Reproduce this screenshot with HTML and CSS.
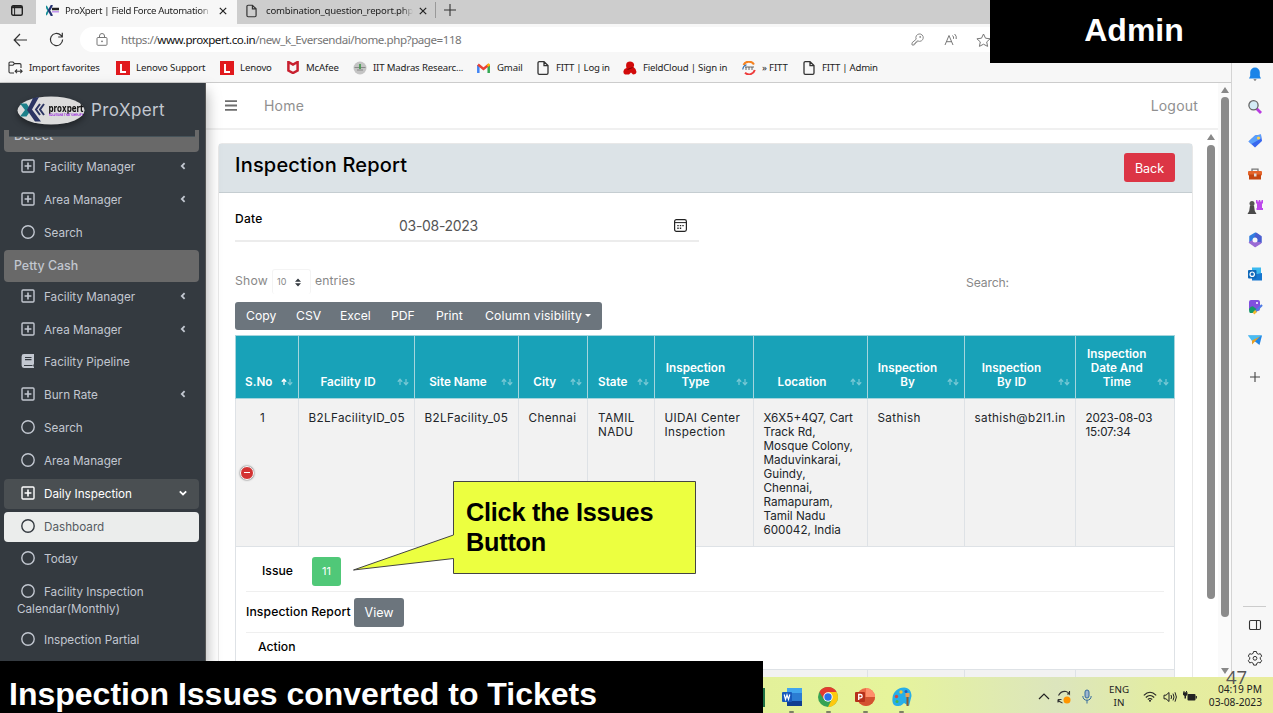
FILE: index.html
```
<!DOCTYPE html>
<html lang="en">
<head>
  <meta charset="UTF-8" />
  <title>ProXpert | Field Force Automation</title>
  <link rel="stylesheet" href="styles.css">
</head>
<body>
  <svg class="defs">
    <symbol id="plus-box" viewBox="0 0 14 14"><rect x="1" y="1" width="12" height="12" rx="1" fill="none" stroke="currentColor" stroke-width="1.4"/><path d="M7 3.6v6.8M3.6 7h6.8" stroke="currentColor" stroke-width="1.6"/></symbol>
    <symbol id="ring" viewBox="0 0 14 14"><circle cx="7" cy="7" r="6.2" fill="none" stroke="currentColor" stroke-width="1.4"/></symbol>
    <symbol id="book" viewBox="0 0 14 14"><path d="M3 0h10v10.5h-.7v2H13V14H3a2.4 2.4 0 0 1-2.4-2.4V2.4A2.4 2.4 0 0 1 3 0z" fill="currentColor"/><path d="M4 3.5h6.5M4 5.6h6.5M3 11.5h8.5" stroke="#343a40" stroke-width="1.1"/></symbol>
    <symbol id="left" viewBox="0 0 8 8"><path d="M5.6 1.2 2.8 4l2.8 2.8" fill="none" stroke="currentColor" stroke-width="1.8"/></symbol>
    <symbol id="down" viewBox="0 0 8 8"><path d="M.8 2.4 4 5.4l3.2-3" fill="none" stroke="currentColor" stroke-width="1.8"/></symbol>
    <symbol id="page" viewBox="0 0 12 14"><path d="M1 2a1.3 1.3 0 0 1 1.3-1.3H7L11 4.6V12a1.3 1.3 0 0 1-1.3 1.3H2.3A1.3 1.3 0 0 1 1 12zM7 .7v3.9h4" fill="none" stroke="#333" stroke-width="1.3"/></symbol>
    <symbol id="lenovo" viewBox="0 0 14 14"><rect width="14" height="14" fill="#e1191d"/><path d="M5 3v8h5" fill="none" stroke="#fff" stroke-width="1.9"/></symbol>
    <symbol id="sort" viewBox="0 0 12 8"><path d="M3 7V1.5M.8 3.7 3 1.3l2.2 2.4" fill="none" stroke="#fff" stroke-width="1.3"/><path d="M9 1v5.5M6.8 4.3 9 6.7l2.2-2.4" fill="none" stroke="#fff" stroke-opacity=".4" stroke-width="1.3"/></symbol>
    <symbol id="sort-off" viewBox="0 0 12 8"><path d="M3 7V1.5M.8 3.7 3 1.3l2.2 2.4M9 1v5.5M6.8 4.3 9 6.7l2.2-2.4" fill="none" stroke="#fff" stroke-opacity=".4" stroke-width="1.3"/></symbol>
    <symbol id="close" viewBox="0 0 8 8"><path d="M.8.8l6.4 6.4M7.2.8.8 7.2" stroke="#222" stroke-width="1.2"/></symbol>
  </svg>

  <div class="screen">
    <div class="tabs">
      <div class="workspaces"><svg width="12" height="11" viewBox="0 0 12 11"><rect x=".7" y=".7" width="10.6" height="9.6" rx="1.5" fill="none" stroke="#222" stroke-width="1.4"/><path d="M1 2.2h10" stroke="#222" stroke-width="2"/><path d="M3.600 1v9" stroke="#222"/></svg></div>
      <div class="tab active">
        <svg width="13" height="11" viewBox="0 0 13 11"><path d="M0 1l2.4 4.5L0 10" fill="none" stroke="#178e96" stroke-width="1.8"/><path d="M6 0 3 5.5 6 11" fill="none" stroke="#263272" stroke-width="2.2"/><path d="M6 4h7" stroke="#222" stroke-width="2.5"/><path d="M6 6.8h7" stroke="#b983ec" stroke-width="1.3"/></svg>
        <span class="tab-title first">ProXpert | Field Force Automation</span>
        <svg width="8" height="8"><use href="#close"/></svg>
      </div>
      <div class="tab">
        <svg width="11" height="14"><use href="#page"/></svg>
        <span class="tab-title second">combination_question_report.php</span>
        <svg width="8" height="8"><use href="#close"/></svg>
      </div>
      <svg class="new-tab" width="12" height="12" viewBox="0 0 12 12"><path d="M6 0v12M0 6h12" stroke="#333" stroke-width="1.1"/></svg>
    </div>

    <div class="toolbar">
      <svg class="back" width="15" height="14" viewBox="0 0 15 14"><path d="M14 7H1.5M7 1 1.2 7 7 13" fill="none" stroke="#333" stroke-width="1.2"/></svg>
      <svg class="reload" width="15" height="15" viewBox="0 0 15 15"><path d="M13.6 7.5A6.1 6.1 0 1 1 11.8 3.200L13.300 4.900M13.300.8v4.200H9.200" fill="none" stroke="#333" stroke-width="1.2"/></svg>
      <div class="address">
        <svg width="12" height="13" viewBox="0 0 12 13"><rect x="1" y="4.500" width="10" height="7.800" rx="1" fill="none" stroke="#777"/><path d="M3.500 4.500V3a2.500 2.500 0 0 1 5 0v1.500" fill="none" stroke="#777"/><circle cx="6" cy="8.300" r=".9" fill="#777"/></svg>
        <span class="url">https://<b>www.proxpert.co.in</b>/new_k_Eversendai/home.php?page=118</span>
        <svg class="key" width="13" height="13" viewBox="0 0 13 13"><path d="M5.200 6.200A3.700 3.700 0 1 1 7 8H5.900v1.300H4.500v1.400H3.200V12H1v-2.200z" fill="none" stroke="#888"/><circle cx="9.200" cy="3.900" r=".9" fill="#888"/></svg>
        <svg class="read" width="14" height="13" viewBox="0 0 14 13"><path d="M1 12 5 2.500 9 12M2.500 8.700h5M8.500 2.500q1.500 1.300 1 3.300M10.600 1q2.300 2 1.600 5" fill="none" stroke="#777"/></svg>
        <svg class="star" width="15" height="14" viewBox="0 0 15 14"><path d="m7.500 1 2 4.200 4.600.6-3.400 3.100.9 4.500-4.100-2.200-4.100 2.200.9-4.500L.9 5.800l4.600-.6z" fill="none" stroke="#777"/></svg>
      </div>
    </div>

    <div class="bookmarks">
      <a class="bm import"><svg width="15" height="13" viewBox="0 0 15 13"><path d="M6 12H2.200A1.200 1.200 0 0 1 1 10.800V2.200A1.200 1.200 0 0 1 2.200 1H5l1.500 1.600h5.300A1.200 1.200 0 0 1 13 3.800V7M1 4.200h4l1.500-1.500M7.500 10.300h6M9 8.500l-1.800 1.800L9 12.100M12.300 8.500l1.800 1.800-1.800 1.800" fill="none" stroke="#333" stroke-width="1.100"/></svg>Import favorites</a>
      <a class="bm lsup"><svg width="14" height="14"><use href="#lenovo"/></svg>Lenovo Support</a>
      <a class="bm len"><svg width="14" height="14"><use href="#lenovo"/></svg>Lenovo</a>
      <a class="bm mca"><svg width="12" height="13" viewBox="0 0 12 13"><path d="M1.400 1 6 3.500 10.600 1v8.500L6 12 1.400 9.500z" fill="none" stroke="#c8202f" stroke-width="2.500"/></svg>McAfee</a>
      <a class="bm iit"><svg width="14" height="14" viewBox="0 0 14 14"><circle cx="7" cy="7" r="6.500" fill="#c4c4c4"/><path d="M1.500 6.500h11M4 9h6" stroke="#888"/><path d="M7 3v5" stroke="#4a9b54" stroke-width="1.800"/></svg>IIT Madras Researc...</a>
      <a class="bm gm"><svg width="13" height="10" viewBox="0 0 13 10"><path d="M1.300 10V2" stroke="#4285f4" stroke-width="2.500"/><path d="M11.700 10V2" stroke="#34a853" stroke-width="2.500"/><path d="M1 1.500 6.500 6 12 1.500" fill="none" stroke="#ea4335" stroke-width="2.500"/><path d="M10.500 3 12.500 1" stroke="#fbbc04" stroke-width="2.400"/></svg>Gmail</a>
      <a class="bm fl"><svg width="12" height="14"><use href="#page"/></svg>FITT | Log in</a>
      <a class="bm fc"><svg width="14" height="14" viewBox="0 0 14 14"><path d="M4 1.500Q7-.5 10 1.500q2 2 .5 4.500 3 2 3 5-.5 2.500-3.500 2.500L8 11.500l-2 2H2Q0 12.500.5 10 1 7.500 3.500 7 2.500 3.500 4 1.500z" fill="#d20a0a"/><path d="M4.500 8.500l5-2" stroke="#7c0606"/></svg>FieldCloud | Sign in</a>
      <a class="bm ff"><svg width="14" height="14" viewBox="0 0 14 14"><path d="M1.500 4A6 6 0 0 1 12 3.500" fill="none" stroke="#f58220" stroke-width="2"/><path d="M12.800 9A6 6 0 0 1 3 11.800" fill="none" stroke="#ee3b3b" stroke-width="2"/><path d="M.8 8.500Q1 5 4.500 3.800" fill="none" stroke="#2b6cb0" stroke-width="1.200"/><path d="M3 6h9M4 6v3M7 6v3M10 6v3" stroke="#555" stroke-width=".9"/></svg>» FITT</a>
      <a class="bm fa"><svg width="12" height="14"><use href="#page"/></svg>FITT | Admin</a>
    </div>

    <div class="view">
      <div class="sidebar">
        <div class="brand">
          <svg width="72" height="36" viewBox="0 0 72 36"><ellipse cx="37" cy="18.500" rx="33.500" ry="14" fill="#dcdcdc"/><path d="M6 11.500 11 18l-5 6.500h6.500L17 18l-4.500-6.500z" fill="#1c808a"/><path d="m19 6 6-1-7 12.500 9 12h-6L13 18z" fill="#2b3563"/><path d="m26 12-4 5.500 4 5.500M30 12l-4 5.500 4 5.500" fill="none" stroke="#2b3563" stroke-width="2"/><text class="logo-name" x="34.500" y="19.500" textLength="35" lengthAdjust="spacingAndGlyphs">proxpert</text><text class="logo-tag" x="35" y="24" textLength="34" lengthAdjust="spacingAndGlyphs">SOLUTIONS THAT SIMPLIFY</text></svg>
          <span>ProXpert</span>
        </div>
        <div class="nav-header cut">Defect</div>
        <a class="item"><svg class="ico"><use href="#plus-box"/></svg>Facility Manager<svg class="arrow"><use href="#left"/></svg></a>
        <a class="item"><svg class="ico"><use href="#plus-box"/></svg>Area Manager<svg class="arrow"><use href="#left"/></svg></a>
        <a class="item"><svg class="ico"><use href="#ring"/></svg>Search</a>
        <div class="nav-header">Petty Cash</div>
        <a class="item"><svg class="ico"><use href="#plus-box"/></svg>Facility Manager<svg class="arrow"><use href="#left"/></svg></a>
        <a class="item"><svg class="ico"><use href="#plus-box"/></svg>Area Manager<svg class="arrow"><use href="#left"/></svg></a>
        <a class="item"><svg class="ico"><use href="#book"/></svg>Facility Pipeline</a>
        <a class="item"><svg class="ico"><use href="#plus-box"/></svg>Burn Rate<svg class="arrow"><use href="#left"/></svg></a>
        <a class="item"><svg class="ico"><use href="#ring"/></svg>Search</a>
        <a class="item"><svg class="ico"><use href="#ring"/></svg>Area Manager</a>
        <a class="item open"><svg class="ico"><use href="#plus-box"/></svg>Daily Inspection<svg class="arrow"><use href="#down"/></svg></a>
        <a class="item current"><svg class="ico"><use href="#ring"/></svg>Dashboard</a>
        <a class="item"><svg class="ico"><use href="#ring"/></svg>Today</a>
        <a class="item"><svg class="ico"><use href="#ring"/></svg>Facility Inspection</a>
        <span class="wrap">Calendar(Monthly)</span>
        <a class="item"><svg class="ico"><use href="#ring"/></svg>Inspection Partial</a>
      </div>

      <div class="main">
        <div class="navbar">
          <svg width="12" height="11" viewBox="0 0 12 11"><path d="M0 1.200h12M0 5.500h12M0 9.800h12" stroke="#6e6e6e" stroke-width="1.800"/></svg>
          <span class="home">Home</span>
          <span class="logout">Logout</span>
        </div>
        <div class="content">
          <div class="card">
            <div class="card-header">
              <h3>Inspection Report</h3>
              <button class="btn-back">Back</button>
            </div>
            <div class="card-body">
              <div class="date-row">
                <label>Date</label>
                <span class="date">03-08-2023</span>
                <svg width="13" height="13" viewBox="0 0 13 13"><rect x=".6" y=".6" width="11.800" height="11.800" rx="1.800" fill="none" stroke="#222" stroke-width="1.200"/><path d="M1 3.600h11" stroke="#222"/><path d="M3.300 6.600h1.400M5.800 6.600h1.400M8.300 6.600h1.400M3.300 9.200h1.400M5.800 9.200h1.400" stroke="#222" stroke-width="1.400"/></svg>
              </div>
              <div class="controls">
                <span class="show">Show</span>
                <span class="select">10<svg width="6" height="9" viewBox="0 0 6 9"><path d="M0 3.700 3 .4l3 3.300zM0 5.300l3 3.300 3-3.300z" fill="#343a40"/></svg></span>
                <span class="entries">entries</span>
                <span class="search">Search:</span>
              </div>
              <div class="buttons">
                <span class="b1">Copy</span><span class="b2">CSV</span><span class="b3">Excel</span><span class="b4">PDF</span><span class="b5">Print</span><span class="b6">Column visibility<i></i></span>
              </div>
              <table>
                <colgroup><col class="c1"><col class="c2"><col class="c3"><col class="c4"><col class="c5"><col class="c6"><col class="c7"><col class="c8"><col class="c9"><col class="c10"></colgroup>
                <thead>
                  <tr>
                    <th class="asc">S.No<svg><use href="#sort"/></svg></th>
                    <th>Facility ID<svg><use href="#sort-off"/></svg></th>
                    <th>Site Name<svg><use href="#sort-off"/></svg></th>
                    <th>City<svg><use href="#sort-off"/></svg></th>
                    <th>State<svg><use href="#sort-off"/></svg></th>
                    <th>Inspection<br>Type<svg><use href="#sort-off"/></svg></th>
                    <th>Location<svg><use href="#sort-off"/></svg></th>
                    <th>Inspection<br>By<svg><use href="#sort-off"/></svg></th>
                    <th>Inspection<br>By ID<svg><use href="#sort-off"/></svg></th>
                    <th>Inspection<br>Date And<br>Time<svg><use href="#sort-off"/></svg></th>
                  </tr>
                </thead>
                <tbody>
                  <tr class="row">
                    <td class="num">1<span class="collapse"></span></td>
                    <td class="wide">B2LFacilityID_05</td>
                    <td class="wide">B2LFacility_05</td>
                    <td class="wide">Chennai</td>
                    <td class="wide">TAMIL<br>NADU</td>
                    <td class="wide">UIDAI Center<br>Inspection</td>
                    <td>X6X5+4Q7, Cart<br>Track Rd,<br>Mosque Colony,<br>Maduvinkarai,<br>Guindy,<br>Chennai,<br>Ramapuram,<br>Tamil Nadu<br>600042, India</td>
                    <td class="wide">Sathish</td>
                    <td class="wide">sathish@b2l1.in</td>
                    <td class="stamp">2023-08-03<br>15:07:34</td>
                  </tr>
                  <tr class="child">
                    <td colspan="10">
                      <div class="detail issue"><b>Issue</b><button class="btn-issue">11</button></div>
                      <div class="detail report"><b>Inspection Report</b><button class="btn-view">View</button></div>
                      <div class="detail action"><b>Action</b></div>
                    </td>
                  </tr>
                  <tr class="next"><td></td><td></td><td></td><td></td><td></td><td></td><td></td><td></td><td></td><td></td></tr>
                </tbody>
              </table>
            </div>
          </div>
          <div class="scroll inner"><i class="tri"></i><div class="thumb"></div></div>
        </div>
      </div>
      <div class="scroll outer"><i class="tri"></i><div class="thumb"></div><i class="tri flip"></i></div>

      <div class="edge">
        <svg viewBox="0 0 16 16"><path d="M8 1.500a4.800 4.800 0 0 1 4.800 4.800V10l1.200 2.500H2L3.200 10V6.300A4.800 4.800 0 0 1 8 1.500z" fill="#1a84e8"/><path d="M6.300 13.200h3.400L8 15z" fill="#666"/></svg>
        <svg viewBox="0 0 16 16"><path d="m9.500 9.500 4.500 4.500" stroke="#b83be0" stroke-width="2.800"/><circle cx="6.500" cy="6.300" r="4.600" fill="#d4ecf6" stroke="#666" stroke-width="1.300"/></svg>
        <svg viewBox="0 0 16 16"><path d="M8 2.500 14 1.500l1 6.500-7 6.500L1.500 8.500z" fill="#3867ee"/><path d="M8 2.500 14 1.500v4L4.500 11 1.500 8.500z" fill="#5aa0fb"/><circle cx="11.500" cy="5" r="1.600" fill="#ffcf4a"/></svg>
        <svg viewBox="0 0 16 16"><path d="M5 5V3.200h6V5" fill="none" stroke="#777" stroke-width="1.300"/><rect x="1" y="5" width="14" height="4.500" rx="1" fill="#e4652b"/><rect x="2" y="8.500" width="12" height="5" fill="#c44610"/><rect x="7" y="7.500" width="2.500" height="3" fill="#ddd"/></svg>
        <svg viewBox="0 0 16 16"><path d="M9 1h1.500v1.500h1.200V1h1.600v1.500h1.200V1H16v3.500h-1V9h1v2H9.500V9H10V4.500H9z" fill="#bd48ec"/><circle cx="5" cy="4.500" r="2.500" fill="#555"/><path d="M3 6.500h4l.8 5.500 1.700 3H.5L2.200 12z" fill="#4a4a4a"/></svg>
        <svg viewBox="0 0 16 16"><path d="M8.500 1.200 3 4.500v6L8 8.500V6l4-2z" fill="#317ee0" stroke="#317ee0" stroke-width="1.500" stroke-linejoin="round"/><path d="m9.500 1.500 4.500 3v6L10.500 9V6.500L8 5z" fill="#4a5ed0" stroke="#4a5ed0" stroke-width="1.500" stroke-linejoin="round"/><path d="m2.500 10.500 4-2 3 2 4 .5L8 14.500z" fill="#9a6bd5" stroke="#9a6bd5" stroke-width="1.500" stroke-linejoin="round"/><circle cx="8" cy="8" r="2.500" fill="#f7f7f7"/></svg>
        <svg viewBox="0 0 16 16"><rect x="5" y="1.500" width="9" height="12" fill="#3bb9ef"/><path d="M5 9 15 7v7.500H5z" fill="#1676cf"/><rect x="1" y="4" width="8.500" height="8.500" rx="1" fill="#0f68b9"/><circle cx="5.200" cy="8.200" r="2.200" fill="none" stroke="#fff" stroke-width="1.200"/></svg>
        <svg viewBox="0 0 16 16"><rect x="2" y="1" width="11" height="11" rx="2" fill="#8150df"/><path d="M2 10q3-5 6-1l3 2q-1 2-3 3H3q-1-1-1-4z" fill="#159a69"/><path d="m8 13 7-7" stroke="#4f7be5" stroke-width="2.200"/><path d="M6.500 14.500 9 12" stroke="#f5b82a" stroke-width="2.500"/><circle cx="10" cy="4" r="1" fill="#fff"/></svg>
        <svg viewBox="0 0 16 16"><path d="M1 3.500h14L12.500 13 8 9.500z" fill="#2186e6"/><path d="M1 3.500h14L5 9z" fill="#49bdf2"/><path d="M5 8.500 13 4.500 7.500 10 5 12.500z" fill="#e9a025"/></svg>
        <svg class="add" viewBox="0 0 16 16"><path d="M8 3v10M3 8h10" stroke="#444" stroke-width="1.100"/></svg>
        <div class="edge-foot">
          <svg viewBox="0 0 16 16"><rect x="2.500" y="3.500" width="11" height="9" rx="1.200" fill="none" stroke="#333" stroke-width="1.100"/><path d="M9.500 3.500v9" stroke="#333" stroke-width="1.100"/></svg>
          <svg viewBox="0 0 16 16"><path d="M6.600 1.500h2.800l.5 1.900 1.500.8 1.900-.5 1.400 2.400L13.300 7.500v1.700l1.400 1.300-1.400 2.400-1.900-.5-1.500.8-.5 1.900H6.600l-.5-1.900-1.500-.8-1.900.5-1.400-2.400 1.400-1.300V7.500L1.300 6.100l1.400-2.400 1.900.5 1.500-.8z" fill="none" stroke="#333" stroke-linejoin="round"/><circle cx="8" cy="8.300" r="1.900" fill="none" stroke="#333"/></svg>
        </div>
      </div>
    </div>

    <div class="taskbar">
      <div class="apps">
        <i class="excel"></i>
        <div class="app"><svg viewBox="0 0 20 20"><rect x="5" y="1" width="15" height="18" rx="1.500" fill="#2b7cd3"/><path d="M5 1h15v5H5z" fill="#41a5ee"/><path d="M5 14h15v5H5z" fill="#103f91"/><rect y="5" width="10" height="10" rx="1" fill="#185abd"/><path d="m2.200 7.500 1.300 5L5 8l1.500 4.500 1.300-5" fill="none" stroke="#fff" stroke-width="1.200"/></svg></div>
        <div class="app"><svg viewBox="0 0 20 20"><circle cx="10" cy="10" r="10" fill="#35a353"/><path d="M18.660 5A10 10 0 0 1 10 20l4-8-4-7z" fill="#fdc90f"/><path d="M1.340 5A10 10 0 0 1 18.660 5H10l-4 7.500z" fill="#e33b2e"/><circle cx="10" cy="10" r="4.700" fill="#fff"/><circle cx="10" cy="10" r="3.700" fill="#2a6fe8"/></svg></div>
        <div class="app"><svg viewBox="0 0 20 20"><circle cx="11" cy="10" r="9" fill="#ed6c47"/><path d="M11 1a9 9 0 0 1 9 9h-9z" fill="#ff8f6b"/><path d="M2 10h18a9 9 0 0 1-18 0z" fill="#d35230"/><rect y="5" width="10" height="10" rx="1" fill="#b7301a"/><path d="M3.700 13V7.500h1.800a1.600 1.600 0 0 1 0 3.300H3.700" fill="none" stroke="#fff" stroke-width="1.300"/></svg></div>
        <div class="app"><svg viewBox="0 0 20 20"><path d="M12 .5c5 0 7.500 4 7.500 8.500L17 19l-5-3c-3 3-4 3-7 3-4 0-5-4-4.500-8C1 5 6 .5 12 .5z" fill="#27aee8"/><circle cx="9" cy="5" r="1.700" fill="#f4c430"/><circle cx="4.500" cy="9.500" r="1.700" fill="#d6473e"/><circle cx="5" cy="14.500" r="1.500" fill="#45b649"/><circle cx="14" cy="4.500" r="1.500" fill="#1f5fc4"/><path d="M15.500 8v11" stroke="#8c5a2f" stroke-width="2"/><path d="M13.500 6h4v4h-4z" fill="#e8a058"/></svg></div>
      </div>
      <div class="tray">
        <svg class="chev" width="12" height="7" viewBox="0 0 12 7"><path d="m1 6 5-5 5 5" fill="none" stroke="#222" stroke-width="1.200"/></svg>
        <svg class="sync" width="14" height="14" viewBox="0 0 14 14"><path d="M1.500 5.500Q4 .8 9 1.500q2 .5 3.500 2.500V1M12.500 4H10M1 9.500h3.500M1 9.500v3M1 9.500q1.500 3 4.500 3.500" fill="none" stroke="#333" stroke-width="1.100"/><circle cx="10" cy="10" r="3.500" fill="#ff9500"/></svg>
        <svg class="mic" width="10" height="15" viewBox="0 0 10 15"><rect x="3" y="1" width="4" height="8" rx="2" fill="#9db6cf" stroke="#356a9d"/><path d="M.8 7q.3 4.200 4.200 4.200T9.200 7M5 11v3.500" fill="none" stroke="#356a9d"/></svg>
        <div class="lang">ENG<br>IN</div>
        <svg class="wifi" width="14" height="11" viewBox="0 0 14 11"><path d="M.8 4.300q6.200-6.200 12.400 0M2.800 6.500q4.200-4 8.400 0M4.800 8.500q2.200-2 4.400 0" fill="none" stroke="#222" stroke-width="1.100"/><circle cx="7" cy="9.800" r="1" fill="#222"/></svg>
        <svg class="vol" width="14" height="12" viewBox="0 0 14 12"><path d="M1 4.200h2L6 1.500v9L3 7.800H1zM8 4q1.200 2 0 4M10 2.600q2 3.400 0 6.800M12 1.300q2.800 4.700 0 9.400" fill="none" stroke="#222"/></svg>
        <svg class="bat" width="14" height="11" viewBox="0 0 14 11"><rect x="4.500" y="3" width="8" height="6.500" rx="1" fill="#222"/><path d="M13.300 5v2.500" stroke="#222" stroke-width="1.200"/><path d="M1 0v1.500M3.500 0v1.500" stroke="#222"/><path d="M0 1.200h4.500v2.500L3 5v2.500H1.500V5L0 3.700z" fill="#222"/></svg>
        <div class="clock">04:19 PM<br>03-08-2023</div>
      </div>
    </div>

    <!-- slide annotations over the capture -->
    <div class="role">Admin</div>
    <div class="caption">Inspection Issues converted to Tickets</div>
    <div class="slide-no">47</div>
    <div class="callout">
      <svg width="344" height="94" viewBox="0 0 344 94"><path d="M100.500.5h242v92h-242V77.500L.5 89l100-35z" fill="#ecff40" stroke="#444"/></svg>
      <p>Click the Issues<br>Button</p>
    </div>
  </div>
</body>
</html>
```
FILE: styles.css
```
* {
  box-sizing: border-box;
}
body {
  margin: 0;
  font-family: Inter, "Liberation Sans", sans-serif;
  font-size: 11.7px;
  overflow: hidden;
}
svg {
  display: block;
  flex-shrink: 0;
}
.defs {
  display: none;
}
.screen {
  position: relative;
  width: 1273px;
  height: 713px;
  display: flex;
  flex-direction: column;
  overflow: hidden;
  background: #f7f7f7;
}

/* Browser chrome */
.tabs, .toolbar, .bookmarks, .taskbar {
  font-family: "Noto Sans", "Open Sans", sans-serif;
}
.tabs {
  height: 24px;
  display: flex;
  background: #cdcdcd;
}
.workspaces {
  width: 36px;
  padding: 5px 0 0 11px;
}
.tab {
  width: 199px;
  display: flex;
  align-items: center;
  padding: 0 8px 3px 9px;
  font-size: 9.6px;
  color: #222;
}
.tab.active {
  width: 201px;
  padding-left: 10px;
  background: #f7f7f7;
}
.tab-title {
  height: 16px;
  line-height: 16px;
  overflow: hidden;
  white-space: nowrap;
  -webkit-mask-image: linear-gradient(90deg, #000 92%, transparent);
}
.first {
  width: 146px;
  margin: 0 8px 0 6px;
  letter-spacing: -0.33px;
}
.second {
  width: 147px;
  margin: 0 6px 0 9px;
  letter-spacing: -0.2px;
}
.new-tab {
  width: 21px;
  height: 16px;
  margin: 2px 0 0 -1px;
  padding: 2px 0 2px 8px;
  border-left: 1px solid #999;
}
.toolbar {
  height: 29px;
  display: flex;
  align-items: center;
  padding: 3px 0 1px 13px;
}
.reload {
  margin-left: 21px;
}
.address {
  width: 1160px;
  height: 25px;
  margin-left: 16px;
  padding-left: 16px;
  display: flex;
  align-items: center;
  background: #fff;
  border-radius: 13px;
}
.url {
  width: 783px;
  margin-left: 13px;
  font-size: 11.6px;
  letter-spacing: -0.46px;
  color: #757575;
}
.url b {
  font-weight: 400;
  color: #111;
}
.key {
  margin-left: 7px;
}
.read {
  margin-left: 20px;
}
.star {
  margin-left: 18px;
}
.bookmarks {
  height: 30px;
  display: flex;
  border-bottom: 1px solid #ccc;
}
.bm {
  display: flex;
  align-items: center;
  gap: 6px;
  font-size: 9.6px;
  color: #222;
  white-space: nowrap;
  letter-spacing: -0.15px;
}
.import { width: 108px; margin-left: 8px; height: 29px; }
.lsup { width: 104px; }
.len { width: 67px; }
.mca { width: 66px; gap: 7px; }
.iit { width: 124px; }
.gm { width: 60px; gap: 7px; }
.fl { width: 86px; gap: 7px; letter-spacing: -0.25px; }
.fc { width: 119px; letter-spacing: -0.2px; }
.ff { width: 61px; }
.fa { gap: 7px; letter-spacing: -0.25px; }

.view {
  height: 614px;
  margin-top: -20px;
  padding-top: 20px;
  display: flex;
  overflow: hidden;
}

/* App sidebar */
.sidebar {
  width: 206px;
  flex-shrink: 0;
  background: #343a40;
  border-right: 1px solid #555;
  box-shadow: 0 8px 14px rgba(0, 0, 0, 0.35);
  position: relative;
  z-index: 1;
  color: #c2c7d0;
}
.brand {
  height: 47px;
  display: flex;
  align-items: center;
  padding: 7px 0 0 14px;
  font-size: 17px;
  letter-spacing: 0.4px;
}
.brand span {
  margin-left: 5px;
}
.brand svg {
  letter-spacing: 0;
  filter: drop-shadow(0 3px 3px rgba(0, 0, 0, 0.4));
}
.logo-name {
  font: bold 10px "DejaVu Sans", sans-serif;
  fill: #111;
}
.logo-tag {
  font: bold 3.500px "DejaVu Sans", sans-serif;
  fill: #9a28e0;
}
.nav-header {
  width: 195px;
  height: 32px;
  margin: 2px 0 0 4px;
  padding-left: 10px;
  line-height: 31px;
  font-size: 12.4px;
  font-weight: 500;
  background: #696969;
  border-radius: 4px;
}
.cut {
  position: relative;
  height: 22px;
  margin-top: 0;
  line-height: 12px;
  border-radius: 0 0 4px 4px;
}
.cut::before {
  content: "";
  position: absolute;
  left: 5px;
  top: 0;
  width: 186px;
  height: 6px;
  background: #343a40;
  border-bottom: 1px solid #46535a;
}
.item {
  width: 195px;
  height: 30px;
  margin: 2.85px 0 0 4px;
  padding: 0 12px 0 17px;
  display: flex;
  align-items: center;
  border-radius: 4px;
}
.ico {
  width: 14px;
  height: 14px;
  margin: -2px 9px 0 0;
}
.nav-header + .item {
  margin-top: 0;
}
.arrow {
  width: 8px;
  height: 8px;
  margin: -2px 0 0 auto;
}
.open {
  background: #4a4f52;
  color: #fff;
}
.current {
  background: #ebedec;
  color: #555b61;
}
.current .ico {
  color: #343a40;
}
.wrap {
  display: block;
  height: 16px;
  margin-top: -5px;
  padding-left: 17px;
  line-height: 14px;
}
.wrap + .item {
  margin-top: 7px;
}

/* Main area */
.main {
  width: 1012px;
  flex-shrink: 0;
  background: #fff;
}
.navbar {
  height: 47px;
  display: flex;
  align-items: center;
  padding: 0 20px 0 19px;
  border-bottom: 2px solid #f0f0f0;
  font-size: 14px;
  letter-spacing: 0.2px;
  color: #909090;
}
.home {
  margin-left: 27px;
}
.logout {
  margin-left: auto;
}
.content {
  height: 547px;
  display: flex;
  overflow: hidden;
}
.card {
  width: 975px;
  height: 600px;
  margin: 13px 0 0 12px;
  border: 1px solid #e8e8e8;
  border-radius: 4px 4px 0 0;
}
.card-header {
  height: 49px;
  display: flex;
  justify-content: space-between;
  padding: 9px 17px 0 16px;
  background: #dce3e7;
  border-bottom: 1px solid #c5cdd1;
}
h3 {
  margin: -1px 0 0;
  font-size: 20px;
  letter-spacing: 0.2px;
  line-height: 26px;
  font-weight: 500;
  color: #000;
}
button {
  border: 0;
  border-radius: 3px;
  color: #fff;
  font: 12.5px Inter, sans-serif;
  padding: 0;
}
.btn-back {
  width: 51px;
  height: 29px;
  padding-top: 1px;
  background: #dc3545;
}
.card-body {
  padding: 0 16px;
}
.date-row {
  width: 464px;
  height: 49px;
  display: flex;
  padding-top: 18px;
  border-bottom: 2px solid #ececec;
}
.date-row label {
  width: 164px;
  font-size: 12px;
  letter-spacing: 0.3px;
  font-weight: 500;
  color: #000;
}
.date {
  width: 275px;
  padding-top: 6px;
  font-size: 14px;
  letter-spacing: -0.3px;
  color: #555;
}
.date-row svg {
  margin-top: 8px;
}
.controls {
  height: 60px;
  display: flex;
  padding-top: 27px;
  color: #888;
  font-size: 12.2px;
  line-height: 24px;
}
.show {
  width: 37px;
  letter-spacing: 0.2px;
}
.select {
  width: 39px;
  height: 25px;
  display: flex;
  align-items: center;
  gap: 9px;
  padding-left: 4px;
  border: 1px solid #f4f4f4;
  border-bottom: 0;
  border-radius: 3px;
  font-size: 9px;
}
.entries {
  width: 655px;
  padding-left: 4px;
  letter-spacing: 0.1px;
}
.search {
  padding-top: 2px;
  letter-spacing: -0.15px;
}
.buttons {
  width: 367px;
  height: 28px;
  display: flex;
  align-items: center;
  padding: 0 0 2px 11px;
  background: #6c757d;
  border-radius: 3px;
  color: #fff;
  font-size: 12.2px;
  white-space: nowrap;
}
.b1 { width: 50px; }
.b2 { width: 44px; }
.b3 { width: 51px; }
.b4 { width: 45px; }
.b5 { width: 49px; }
.b6 {
  display: flex;
  align-items: center;
  gap: 3px;
  letter-spacing: 0.17px;
}
.b6 i {
  border: 3.500px solid transparent;
  border-top-color: #fff;
  border-bottom: 0;
}

/* Table */
table {
  width: 939px;
  margin-top: 5px;
  table-layout: fixed;
  border-collapse: collapse;
  font-size: 11.7px;
  line-height: 14px;
  color: #212529;
}
.c1 { width: 62.500px; }
.c2 { width: 116px; }
.c3 { width: 104px; }
.c4 { width: 69.500px; }
.c5 { width: 66.500px; }
.c6 { width: 99px; }
.c7 { width: 114px; }
.c8 { width: 97px; }
.c9 { width: 111px; }
.c10 { width: 99.500px; }
th {
  position: relative;
  height: 63px;
  padding: 0 24px 9px 8px;
  vertical-align: bottom;
  background: #18a2b8;
  border: 1px solid #a5d5dd;
  color: #fff;
  font-weight: 600;
  white-space: nowrap;
}
th svg {
  position: absolute;
  right: 5px;
  bottom: 12px;
  width: 12px;
  height: 8px;
}
td {
  padding: 12px 0 8px 10px;
  vertical-align: top;
  border: 1px solid #dee2e6;
  white-space: nowrap;
}
.wide {
  letter-spacing: 0.35px;
}
.stamp {
  letter-spacing: -0.2px;
}
.row td {
  height: 148px;
  background: #f2f2f2;
}
.row .num {
  position: relative;
  padding-left: 24px;
}
.collapse {
  position: absolute;
  left: 4px;
  top: 67px;
  width: 14px;
  height: 14px;
  border: 1.500px solid #fff;
  border-radius: 50%;
  background: #d33333;
  box-shadow: 0 0 2px #444;
}
.collapse::after {
  content: "";
  position: absolute;
  left: 3px;
  top: 5px;
  width: 6px;
  height: 1px;
  background: #fff;
}
.child td {
  height: 123px;
  padding: 4px 10px 0;
  background: #fff;
}
.detail {
  display: flex;
  align-items: center;
  height: 41px;
  border-bottom: 1px solid #efefef;
  font-size: 12.2px;
  color: #000;
}
.detail b {
  font-weight: 500;
}
.issue b {
  width: 66px;
  padding-left: 16px;
}
.btn-issue {
  width: 29px;
  height: 29px;
  background: #50c878;
  font-size: 11px;
}
.report b {
  width: 108px;
  letter-spacing: 0.1px;
}
.btn-view {
  width: 50px;
  height: 29px;
  background: #6c757d;
}
.action {
  height: 28px;
  padding-left: 12px;
  border: 0;
}
.next td {
  height: 30px;
  background: #f2f2f2;
}

/* Scrollbars */
.scroll {
  display: flex;
  flex-direction: column;
  align-items: center;
}
.inner {
  width: 13px;
  margin-left: 11px;
  padding-top: 4px;
}
.outer {
  width: 13px;
  flex-shrink: 0;
  padding: 4px 0 3px;
  background: #fafafa;
}
.tri {
  border: 4px solid transparent;
  border-bottom: 6px solid #888;
  border-top: 0;
}
.flip {
  margin-top: auto;
  transform: rotate(180deg);
}
.thumb {
  width: 8px;
  height: 454px;
  margin-top: 5px;
  border-radius: 4px;
  background: #8b8b8b;
}
.outer .thumb {
  height: 520px;
  margin-top: 4px;
}

/* Edge side panel */
.edge {
  width: 42px;
  flex-shrink: 0;
  margin-top: -20px;
  padding-top: 3px;
  display: flex;
  flex-direction: column;
  align-items: center;
  gap: 17.3px;
  border-left: 1px solid #d4d4d4;
  background: #f7f7f7;
}
.edge svg {
  width: 16px;
  height: 16px;
  margin-left: 4px;
}
.edge .add {
  margin-top: 3px;
}
.edge-foot {
  width: 23px;
  margin: auto 0 11px 3px;
  padding-top: 10px;
  border-top: 1px solid #ccc;
  display: flex;
  flex-direction: column;
  gap: 17px;
}

/* Taskbar */
.taskbar {
  height: 36px;
  display: flex;
  background: linear-gradient(90deg, #e3f19a 60%, #e6f49b 70%, #dce5bd 83%, #e3eda2 91%, #e9ec9c);
}
.apps {
  width: 256px;
  margin-left: 763px;
  display: flex;
  gap: 16.7px;
}
.excel {
  width: 2px;
  height: 19px;
  margin-top: 11px;
  background: #1e7145;
}
.app {
  width: 20px;
  padding-top: 10px;
}
.app svg {
  width: 20px;
  height: 20px;
}
.app::after {
  content: "";
  display: block;
  width: 5px;
  height: 2px;
  margin: 3.500px auto 0;
  border-radius: 1px;
  background: #7b8064;
}
.tray {
  display: flex;
  align-items: center;
  padding-top: 3px;
  color: #222;
  font-size: 9.8px;
  line-height: 13px;
}
.chev {
  margin-left: 19px;
}
.sync { margin-left: 7px; }
.mic { margin-left: 11px; }
.lang {
  width: 24px;
  margin: -1px 0 0 15px;
  text-align: center;
}
.wifi { margin-left: 12px; }
.vol { margin-left: 6px; }
.bat { margin-left: 6px; }
.clock {
  width: 65px;
  margin-top: -1px;
  font-size: 10.2px;
  text-align: right;
}

/* Slide annotations */
.role, .caption, .slide-no, .callout {
  position: absolute;
  z-index: 2;
  font-family: "Liberation Sans", Arial, sans-serif;
  font-weight: bold;
}
.role {
  left: 990px;
  top: 0;
  width: 283px;
  height: 63px;
  padding-left: 5px;
  background: #000;
  color: #fff;
  font-size: 32px;
  line-height: 61px;
  text-align: center;
}
.caption {
  left: 0;
  top: 661px;
  width: 763px;
  height: 52px;
  padding-left: 9px;
  background: #000;
  color: #fff;
  font-size: 32px;
  line-height: 66px;
  white-space: nowrap;
}
.slide-no {
  left: 1226px;
  top: 665px;
  font: 18.5px/24px "Open Sans", sans-serif;
  color: #555;
}
.callout {
  left: 353px;
  top: 481px;
}
.callout p {
  position: absolute;
  left: 113px;
  top: 16px;
  margin: 0;
  font-size: 25.300px;
  letter-spacing: -0.25px;
  line-height: 30px;
  white-space: nowrap;
  color: #000;
}
```
